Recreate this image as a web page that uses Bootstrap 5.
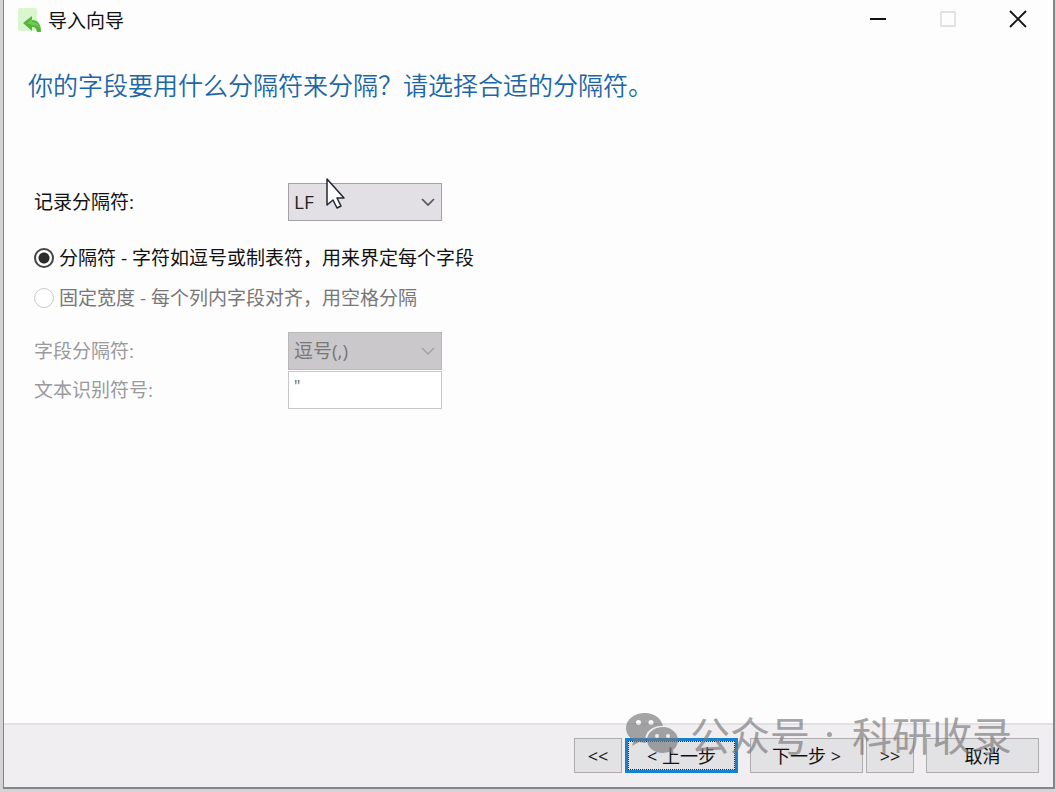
<!DOCTYPE html>
<html lang="zh-CN">
<head>
<meta charset="utf-8">
<meta name="viewport" content="width=device-width, initial-scale=1">
<title>导入向导</title>
<link href="https://cdn.jsdelivr.net/npm/bootstrap@5.3.0/dist/css/bootstrap.min.css" rel="stylesheet">
<style>
  body {
    background: #d4d3d6;
    color: #111;
    font: 19px/24px "Open Sans", "Noto Sans CJK SC", sans-serif;
  }
  .wizard {
    background: #fdfdfd;
    border: solid #858488;
    border-width: 0 2px 2px 1px;
    margin: 0 1px 3px 3px;
  }
  .titlebar { height: 42px; padding-left: 14px; }
  .title-text { font-size: 19px; font-weight: 400; line-height: 24px; }
  .win-btn { width: 70px; height: 42px; color: #111; }
  .win-btn svg { display: block; margin: 0 auto 4px; }
  .win-btn:disabled { color: #c9c4cb; }
  .prompt {
    color: #1a66a8;
    font-size: 25px;
    line-height: 32px;
    font-weight: 350;
    padding: 27px 24px 0;
  }
  .fields { padding: 82px 30px 0; }
  .field-row { height: 38px; }
  .field-label { width: 254px; }
  .field-box { width: 154px; }
  .picker, .quote-box {
    height: 38px;
    border: 1px solid #a3a1a5;
    border-radius: 0;
    color: #222;
    font-size: 19px;
    line-height: 24px;
    padding: 6px 5px;
  }
  .picker {
    background-color: #e2e0e4;
    background-image: url("data:image/svg+xml,%3Csvg xmlns='http://www.w3.org/2000/svg' viewBox='0 0 14 8'%3E%3Cpath d='M1 1l6 6 6-6' fill='none' stroke='%23555' stroke-width='1.7'/%3E%3C/svg%3E");
    background-size: 14px 8px;
    background-position: right 6px center;
  }
  .picker:disabled {
    background-color: #cbc8cb;
    border-color: #b9b6b9;
    color: #777;
    opacity: 1;
    background-image: url("data:image/svg+xml,%3Csvg xmlns='http://www.w3.org/2000/svg' viewBox='0 0 14 8'%3E%3Cpath d='M1 1l6 6 6-6' fill='none' stroke='%23a5a2a5' stroke-width='1.5'/%3E%3C/svg%3E");
  }
  .quote-box:disabled { background: #fff; border-color: #c9c6ca; color: #666; font-size: 16px; padding: 0 5px 8px; }
  .pointer { left: 37px; top: -6px; }
  .choices { padding: 17px 0 14px; }
  .choice { height: 40px; gap: 5px; }
  .choice input {
    appearance: none;
    width: 20px;
    height: 20px;
    margin: 0;
    border: 2px solid #444;
    border-radius: 50%;
    background: #fff;
  }
  .choice input:checked { background: radial-gradient(circle, #2b2b2b 5px, #fff 6px); }
  .choice input.idle { border: 1px solid #c9c8cc; }
  .muted { color: #777; }
  .faint { color: #9a999c; row-gap: 1px; }
  .actions {
    background: #f0eef1;
    border-top: 2px solid #e2e0e3;
    padding: 13px 14px 14px;
    gap: 12px;
  }
  .pair { gap: 3px; }
  .step {
    width: 113px;
    height: 35px;
    padding: 0;
    background: #e2e1e3;
    border: 1px solid #adabae;
    border-radius: 0;
    color: #111;
    font-size: 18px;
    line-height: 24px;
  }
  .jump { width: 48px; }
  .step.current {
    border: 3px solid #1580d0;
    outline: 1px dotted #222;
    outline-offset: -4px;
  }
  .watermark {
    right: 41px;
    bottom: 25px;
    color: #77777a;
    opacity: .65;
    font-size: 40px;
    line-height: 56px;
    pointer-events: none;
    font-family: "Noto Sans CJK SC", sans-serif;
    font-weight: 400;
  }
  .logo { margin-right: 12px; }
  .dot { width: 5px; height: 5px; margin: 0 20px 0 17px; background: currentColor; }
</style>
</head>
<body class="min-vh-100 d-flex flex-column">
<main class="wizard position-relative flex-grow-1 d-flex flex-column">
  <header class="titlebar d-flex align-items-center">
    <svg width="26" height="28" viewBox="0 0 26 28" aria-hidden="true">
      <rect x="0" y="1" width="19" height="23" rx="2" fill="#d9f6cf"/>
      <path d="M5 16L14 9v4c6 0 9 4 9 12h-4c-1-4-2-5-5-5v4z" fill="#55b53a"/>
      <path d="M9 16l5-4v3c4 0 7 2 8 6-2-2-4-3-8-3z" fill="#72c955"/>
    </svg>
    <h1 class="title-text m-0 ms-1">导入向导</h1>
    <div class="d-flex ms-auto">
      <button class="win-btn btn p-0 border-0" type="button" aria-label="最小化">
        <svg width="18" height="18" viewBox="0 0 18 18"><path d="M1 9h16" stroke="currentColor" stroke-width="2"/></svg>
      </button>
      <button class="win-btn btn p-0 border-0" type="button" aria-label="最大化" disabled>
        <svg width="18" height="18" viewBox="0 0 18 18"><path d="M2 2h14v14H2z" fill="none" stroke="currentColor" stroke-width="1.4"/></svg>
      </button>
      <button class="win-btn btn p-0 border-0" type="button" aria-label="关闭">
        <svg width="18" height="18" viewBox="0 0 18 18"><path d="M1 1l16 16M17 1L1 17" stroke="currentColor" stroke-width="1.8"/></svg>
      </button>
    </div>
  </header>

  <h2 class="prompt m-0">你的字段要用什么分隔符来分隔？请选择合适的分隔符。</h2>

  <form class="fields flex-grow-1" id="wizardForm">
    <div class="field-row d-flex align-items-center">
      <label class="field-label" for="recordSep">记录分隔符:</label>
      <div class="field-box position-relative">
        <select class="picker form-select" id="recordSep"><option>LF</option><option>CRLF</option><option>CR</option></select>
        <svg class="pointer position-absolute pe-none" width="22" height="34" viewBox="0 0 22 34" aria-hidden="true">
          <path d="M2 2v26l6-5 4 8 4-2-4-8h7z" fill="#fff" stroke="#222532" stroke-width="1.5" stroke-linejoin="round"/>
        </svg>
      </div>
    </div>
    <div class="choices">
      <div class="choice d-flex align-items-center">
        <input type="radio" name="layout" id="delimited" checked>
        <label for="delimited">分隔符 - 字符如逗号或制表符，用来界定每个字段</label>
      </div>
      <div class="choice d-flex align-items-center">
        <input class="idle" type="radio" name="layout" id="fixedWidth">
        <label class="muted" for="fixedWidth">固定宽度 - 每个列内字段对齐，用空格分隔</label>
      </div>
    </div>
    <div class="faint d-grid">
      <div class="field-row d-flex align-items-center">
        <label class="field-label" for="fieldSep">字段分隔符:</label>
        <div class="field-box"><select class="picker form-select" id="fieldSep" disabled><option>逗号(,)</option></select></div>
      </div>
      <div class="field-row d-flex align-items-center">
        <label class="field-label" for="textQuote">文本识别符号:</label>
        <div class="field-box"><input class="quote-box form-control" type="text" id="textQuote" value="&quot;" disabled></div>
      </div>
    </div>
  </form>

  <footer class="actions d-flex justify-content-end">
    <div class="pair d-flex">
      <button class="step jump btn" type="button">&lt;&lt;</button>
      <button class="step current btn" type="button">&lt; 上一步</button>
    </div>
    <div class="pair d-flex">
      <button class="step btn" type="button">下一步 &gt;</button>
      <button class="step jump btn" type="button">&gt;&gt;</button>
    </div>
    <button class="step btn" type="button">取消</button>
  </footer>

  <div class="watermark position-absolute d-flex align-items-center">
    <svg class="logo" width="52" height="44" viewBox="0 0 52 44" aria-hidden="true">
      <path fill="currentColor" fill-rule="evenodd" d="M19 1C9 1 0 7 0 16c0 5 3 10 8 12l-2 6 7-4 7 1c-3-11 7-18 17-17C35 6 28 1 19 1zM12.500 8a2.500 2.500 0 1 1 0 5 2.500 2.500 0 0 1 0-5zM25 8a2.500 2.500 0 1 1 0 5 2.500 2.500 0 0 1 0-5z"/>
      <path fill="currentColor" fill-rule="evenodd" d="M37 15c-9 0-16 6-16 13s7 13 16 13l6-1 5 3-1-5c3-2 5-6 5-10 0-7-7-13-15-13zM31 22a2 2 0 1 1 0 4 2 2 0 0 1 0-4zM42 22a2 2 0 1 1 0 4 2 2 0 0 1 0-4z"/>
    </svg>
    <span>公众号</span><span class="dot rounded-circle"></span><span>科研收录</span>
  </div>
</main>
</body>
</html>
